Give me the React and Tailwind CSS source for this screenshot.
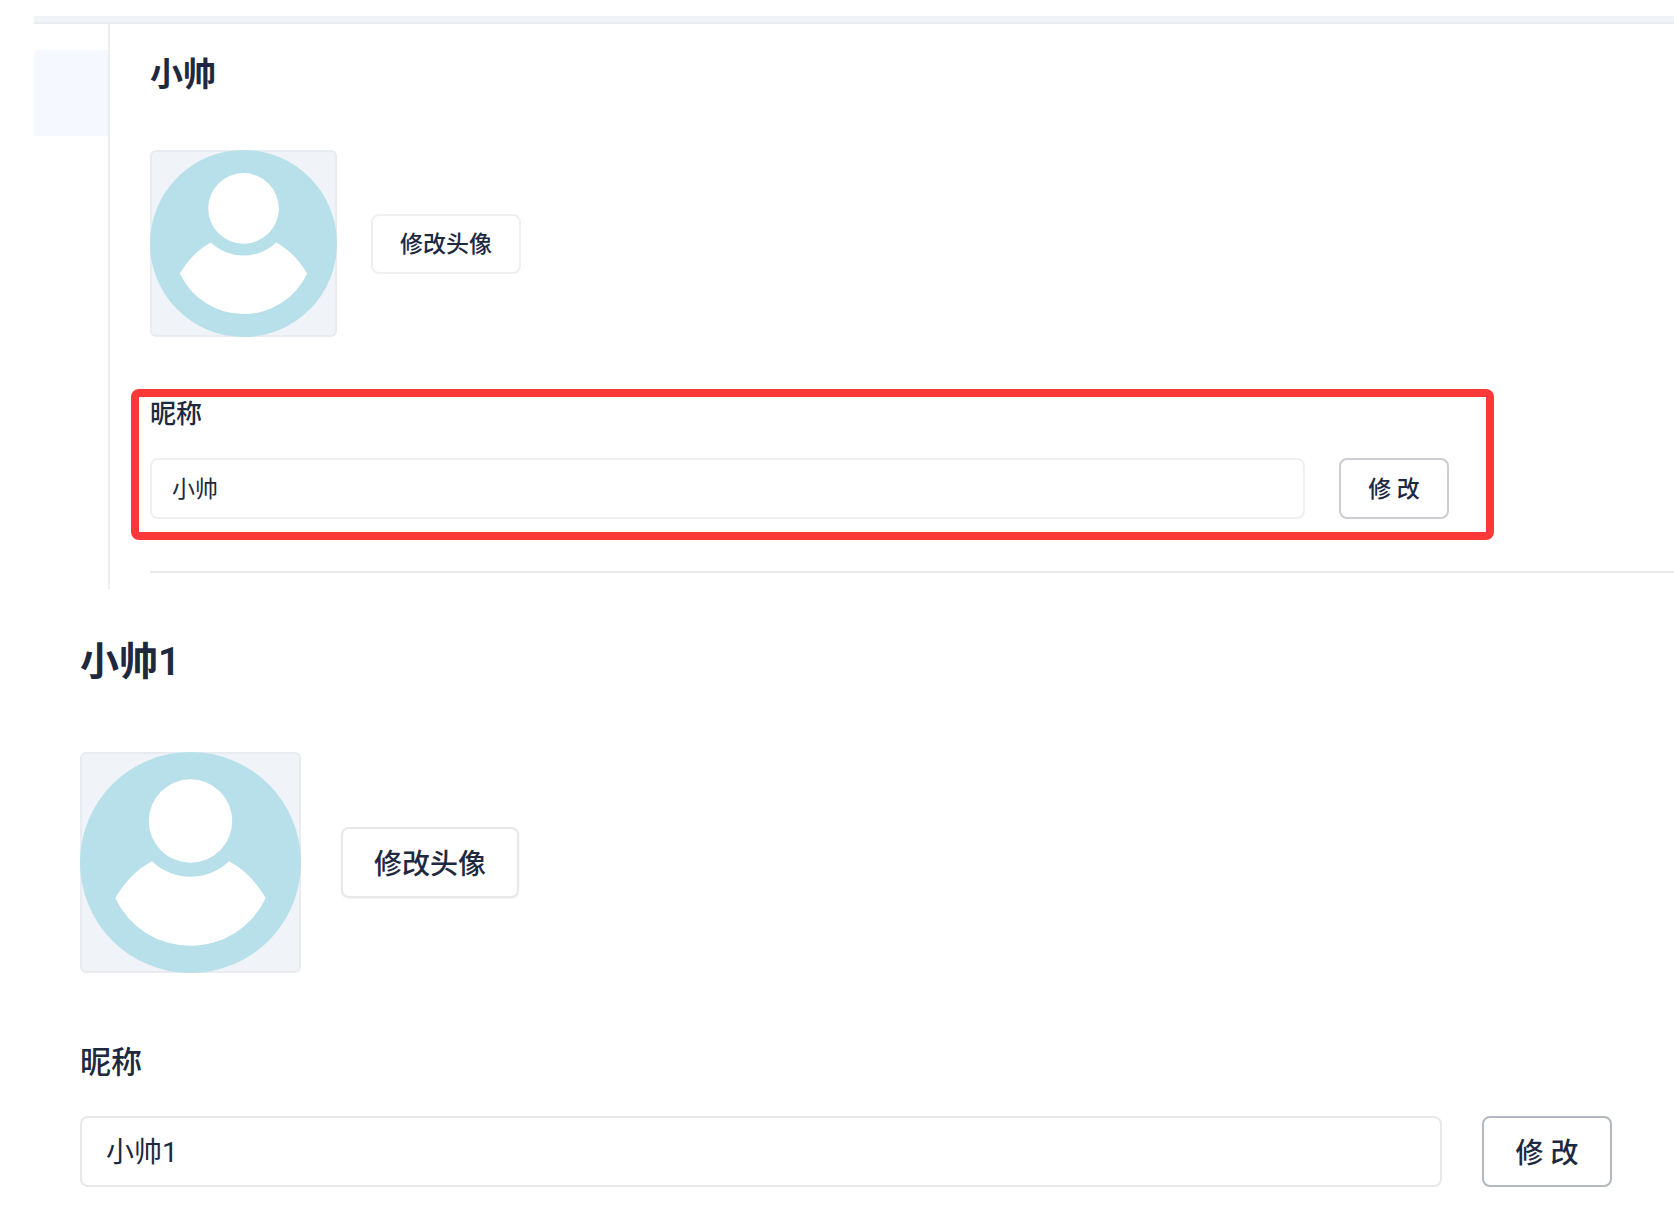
import React, { useState } from "react";
import clsx from "clsx";

function Avatar({ className }) {
  return (
    <div className={clsx("shrink-0 rounded-md border-2 border-[#e8ecf0] bg-[#f0f4f9]", className)}>
      <svg viewBox="0 0 221 221" className="-m-[2px] block h-[calc(100%+4px)] w-[calc(100%+4px)]" role="img" aria-label="头像">
        <circle cx="110.5" cy="110.5" r="110.5" fill="#b8e0ea" />
        <circle cx="110.5" cy="69" r="41.7" fill="#fff" />
        <path
          d="M72 109.3 A55.7 55.7 0 0 0 149 109.3 Q171 121 185.7 146 A83 83 0 0 1 35.3 146 Q50 121 72 109.3 Z"
          fill="#fff"
        />
      </svg>
    </div>
  );
}

function NicknameField({ id, defaultName, large }) {
  const [name, setName] = useState(defaultName);

  return (
    <form onSubmit={(e) => e.preventDefault()}>
      <label
        htmlFor={id}
        className={clsx(
          "block font-medium",
          large ? "mb-[33px] text-[31px] leading-10" : "mb-[27px] text-[26px] leading-[34px]"
        )}
      >
        昵称
      </label>
      <div className={clsx("flex", large ? "gap-10" : "gap-[34px]")}>
        <input
          id={id}
          type="text"
          value={name}
          onChange={(e) => setName(e.target.value)}
          className={clsx(
            "min-w-0 flex-1 rounded-lg border-2 bg-white outline-none",
            large ? "h-[71px] border-[#e7e8ea] px-6 pb-[3px] text-[28px]" : "h-[61px] border-[#eeeff0] px-5 pb-1 text-[23px]"
          )}
        />
        <button
          type="submit"
          className={clsx(
            "shrink-0 rounded-lg border-2 bg-white pt-1 font-medium",
            large ? "h-[71px] w-[130px] border-[#b3b8c0] text-[28px]" : "h-[61px] w-[110px] border-[#cbcdd3] text-[23px]"
          )}
        >
          修 改
        </button>
      </div>
    </form>
  );
}

export default function App() {
  return (
    <div className="min-h-screen bg-white pt-4 font-['Roboto','Noto_Sans_CJK_SC',sans-serif] text-[#1e293f]">
      <section className="ml-[34px]">
        <div className="h-2 border-b-2 border-[#e9ebee] bg-[#f0f4f9]" />
        <div className="flex">
          <aside className="w-[76px] shrink-0 border-r-2 border-[#ebedef] pt-[26px]">
            <div className="h-[86px] bg-[#f5f9ff]" />
          </aside>

          <main className="min-w-0 flex-1 pt-[27px] pb-4 pl-[21px]">
            <div className="pl-[19px]">
              <h1 className="text-[33px] leading-[48px] font-semibold">小帅</h1>
              <div className="mt-[51px] flex items-center gap-[34px]">
                <Avatar className="size-[187px]" />
                <button
                  type="button"
                  className="h-[60px] w-[150px] rounded-lg border-2 border-[#eeeff0] bg-white pt-1 text-[23px] font-medium"
                >
                  修改头像
                </button>
              </div>
            </div>

            {/* highlighted nickname block */}
            <div className="mt-[52px] mr-[180px] rounded-lg border-8 border-[#fd3838] pr-[37px] pb-[13px] pl-[11px]">
              <NicknameField id="nickname-before" defaultName="小帅" />
            </div>

            <hr className="mt-[31px] ml-[19px] border-t-2 border-[#e9eaeb]" />
          </main>
        </div>
      </section>

      <section className="pt-[45px] pr-[62px] pb-7 pl-20">
        <h2 className="text-[39px] leading-[56px] font-semibold">小帅1</h2>
        <div className="mt-[62px] mb-[70px] flex items-center gap-10">
          <Avatar className="size-[221px]" />
          <button
            type="button"
            className="h-[71px] w-[178px] rounded-lg border-2 border-[#e7e8ea] bg-white pt-1 text-[28px] font-medium shadow-xs"
          >
            修改头像
          </button>
        </div>
        <NicknameField id="nickname-after" defaultName="小帅1" large />
      </section>
    </div>
  );
}
